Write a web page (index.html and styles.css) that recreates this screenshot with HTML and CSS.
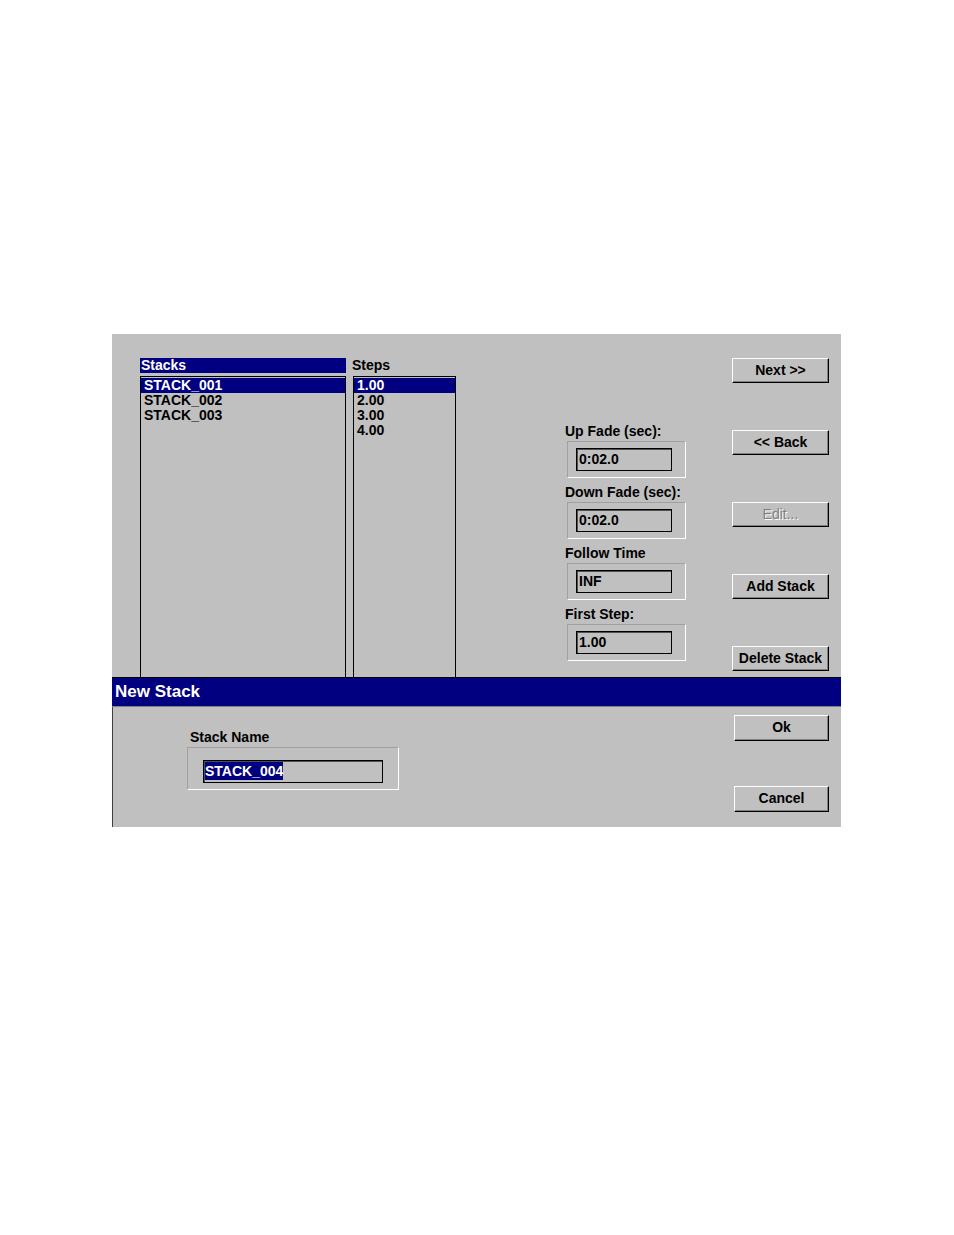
FILE: index.html
```html
<!DOCTYPE html>
<html>
<head>
<meta charset="utf-8">
<title>New Stack</title>
<link rel="stylesheet" href="styles.css">
</head>
<body>
<div class="window">
  <div class="main">
    <div class="col-stacks">
      <div class="list-head">Stacks</div>
      <div class="list list-stacks">
        <div class="item sel">STACK_001</div>
        <div class="item">STACK_002</div>
        <div class="item">STACK_003</div>
      </div>
    </div>
    <div class="col-steps">
      <div class="steps-label">Steps</div>
      <div class="list list-steps">
        <div class="item sel">1.00</div>
        <div class="item">2.00</div>
        <div class="item">3.00</div>
        <div class="item">4.00</div>
      </div>
    </div>
    <div class="col-fields">
      <div class="field">
        <div class="flabel">Up Fade (sec):</div>
        <div class="group"><div class="input">0:02.0</div></div>
      </div>
      <div class="field">
        <div class="flabel">Down Fade (sec):</div>
        <div class="group"><div class="input">0:02.0</div></div>
      </div>
      <div class="field">
        <div class="flabel">Follow Time</div>
        <div class="group"><div class="input">INF</div></div>
      </div>
      <div class="field">
        <div class="flabel">First Step:</div>
        <div class="group"><div class="input">1.00</div></div>
      </div>
    </div>
    <div class="col-buttons">
      <div class="btn">Next &gt;&gt;</div>
      <div class="btn">&lt;&lt; Back</div>
      <div class="btn disabled">Edit...</div>
      <div class="btn">Add Stack</div>
      <div class="btn">Delete Stack</div>
    </div>
  </div>
  <div class="titlebar">New Stack</div>
  <div class="dialog">
    <div class="dlg-left">
      <div class="flabel">Stack Name</div>
      <div class="group group-name"><div class="input input-name"><span class="seltext">STACK_004</span></div></div>
    </div>
    <div class="dlg-buttons">
      <div class="btn btn-dlg">Ok</div>
      <div class="btn btn-dlg">Cancel</div>
    </div>
  </div>
</div>
</body>
</html>
```

FILE: styles.css
```css
html, body {
  margin: 0;
  padding: 0;
  background: #ffffff;
}

body {
  font-family: "Liberation Sans", Arial, sans-serif;
  font-weight: bold;
  font-size: 14px;
  color: #000000;
}

.window {
  margin: 334px 0 0 112px;
  width: 729px;
  background: #c0c0c0;
}

.main {
  box-sizing: border-box;
  height: 343px;
  display: flex;
  padding: 24px 0 0 28px;
  overflow: hidden;
}

.col-stacks {
  width: 206px;
  display: flex;
  flex-direction: column;
}

.list-head {
  height: 15px;
  line-height: 15px;
  background: #000080;
  color: #ffffff;
  padding-left: 1px;
  margin-bottom: 3px;
}

.list {
  box-sizing: border-box;
  flex: 1;
  border: 1px solid #000000;
  border-bottom: none;
  padding-top: 1px;
}

.item {
  height: 15px;
  line-height: 15px;
  padding-left: 3px;
  white-space: nowrap;
}

.item.sel {
  background: #000080;
  color: #ffffff;
}

.col-steps {
  width: 104px;
  margin-left: 6px;
  display: flex;
  flex-direction: column;
}

.steps-label {
  height: 18px;
  line-height: 15px;
}

.list-steps {
  margin-left: 1px;
}

.col-fields {
  width: 121px;
  margin-left: 109px;
  padding-top: 65px;
}

.field {
  margin-bottom: 6px;
}

.flabel {
  height: 16px;
  line-height: 16px;
  margin-bottom: 2px;
  white-space: nowrap;
}

.group {
  box-sizing: border-box;
  margin-left: 2px;
  width: 119px;
  height: 37px;
  border: 1px solid;
  border-color: #a0a0a0 #ffffff #ffffff #a0a0a0;
  padding: 6px 0 0 8px;
}

.input {
  box-sizing: border-box;
  width: 96px;
  height: 23px;
  border: 1px solid #000000;
  box-shadow: inset 1px 1px 0 #505050;
  line-height: 20px;
  padding-left: 2px;
  white-space: nowrap;
}

.col-buttons {
  width: 97px;
  margin-left: 46px;
}

.btn {
  box-sizing: border-box;
  width: 97px;
  height: 25px;
  border: 1px solid;
  border-color: #ffffff #000000 #000000 #ffffff;
  box-shadow: inset -1px -1px 0 #808080;
  text-align: center;
  line-height: 22px;
  margin-bottom: 47px;
  white-space: nowrap;
}

.btn.disabled {
  color: #808080;
  font-weight: normal;
  text-shadow: 1px 1px 0 #ffffff;
}

.titlebar {
  box-sizing: border-box;
  height: 30px;
  background: #000080;
  border-top: 1px solid #000000;
  border-bottom: 1px solid #808080;
  color: #ffffff;
  font-size: 17px;
  line-height: 27px;
  padding-left: 3px;
}

.dialog {
  box-sizing: border-box;
  height: 120px;
  border-left: 1px solid #404040;
  display: flex;
}

.dlg-left {
  margin-left: 77px;
  padding-top: 22px;
}

.group-name {
  margin-left: -3px;
  width: 212px;
  height: 43px;
  padding: 12px 0 0 15px;
}

.input-name {
  width: 180px;
  padding-left: 1px;
}

.seltext {
  background: #000080;
  color: #ffffff;
  padding: 1px 0;
}

.dlg-buttons {
  margin-left: auto;
  margin-right: 12px;
  padding-top: 8px;
}

.btn-dlg {
  width: 95px;
  height: 26px;
  line-height: 23px;
  margin-bottom: 45px;
}
```
